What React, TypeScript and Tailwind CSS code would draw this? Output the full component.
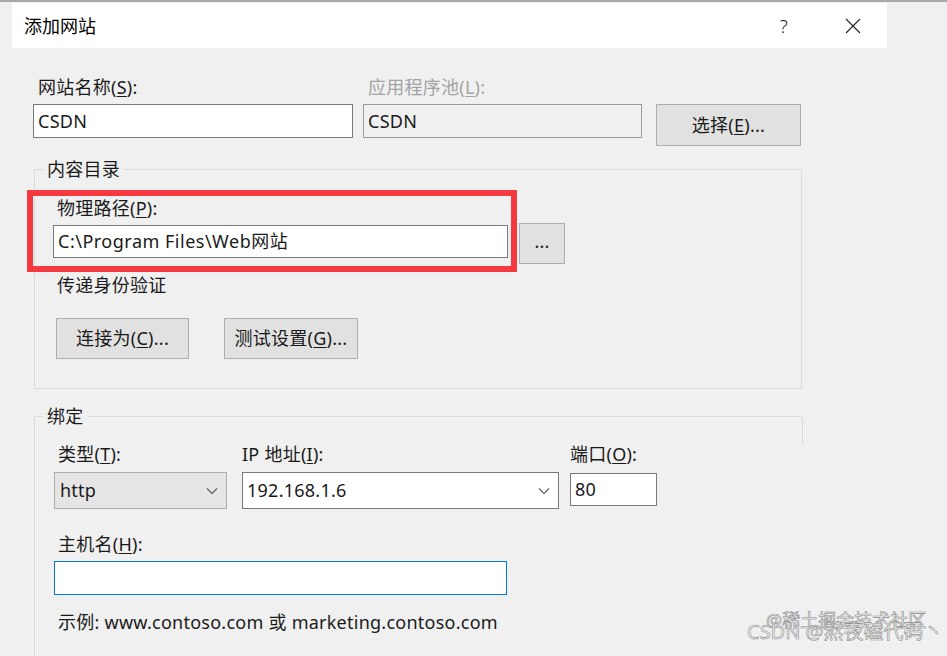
import React from "react";

const Key = ({ k }: { k: string }) => <span className="underline underline-offset-2">{k}</span>;

const Chevron = () => (
  <svg width="12" height="8" viewBox="0 0 12 8" className="shrink-0">
    <path d="M1 1.5 L6 6.5 L11 1.5" fill="none" stroke="#5a5a5a" strokeWidth="1.1" />
  </svg>
);

const GroupLabel = ({ children }: { children: React.ReactNode }) => (
  <div className="-mt-[11px] ml-[8px] h-[20px] w-fit bg-[#f0f0f0] px-[4px] leading-[20px]">{children}</div>
);

export default function App() {
  return (
    <div className="relative h-[656px] w-[947px] overflow-hidden bg-[#f0f0f0] font-['Noto_Sans','Noto_Sans_CJK_SC',sans-serif] text-[18px] tracking-[0.25px] text-[#1a1a1a]">
      <div className="h-[2px] bg-[#a8a8a8]" />

      {/* title bar */}
      <div className="ml-[12px] mt-[1px] flex h-[45px] w-[875px] items-center bg-white pl-[12px]">
        <span className="text-[18px] leading-[22px] tracking-normal text-black">添加网站</span>
        <span className="ml-auto text-[19px] font-light leading-[24px] text-[#222]">?</span>
        <svg width="16" height="16" viewBox="0 0 16 16" className="ml-[57px] mr-[26px]">
          <path d="M1 1 L15 15 M15 1 L1 15" stroke="#222" strokeWidth="1.1" />
        </svg>
      </div>

      <div className="pl-[33px] pt-[29px]">
        {/* site name / pool */}
        <div className="flex items-start">
          <div className="w-[320px]">
            <div className="h-[20px] pl-[5px] leading-[20px]">
              网站名称(<Key k="S" />):
            </div>
            <div className="mt-[7px] flex h-[34px] items-center border border-[#7a7a7a] bg-white pl-[4px]">CSDN</div>
          </div>
          <div className="ml-[10px] w-[279px]">
            <div className="h-[20px] pl-[5px] leading-[20px] text-[#a3a3a3]">
              应用程序池(<Key k="L" />):
            </div>
            <div className="mt-[7px] flex h-[34px] items-center border border-[#9a9a9a] bg-[#f0f0f0] pl-[4px]">CSDN</div>
          </div>
          <button className="ml-[14px] mt-[27px] flex h-[42px] w-[145px] items-center justify-center border border-[#adadad] bg-[#e1e1e1]">
            选择(<Key k="E" />)...
          </button>
        </div>

        {/* content directory */}
        <div className="ml-[1px] mt-[23px] h-[220px] w-[768px] border border-[#dadada]">
          <GroupLabel>内容目录</GroupLabel>
          <div className="ml-[22px] mt-[19px] h-[20px] leading-[20px]">
            物理路径(<Key k="P" />):
          </div>
          <div className="ml-[18px] mt-[5px] flex items-start">
            <div className="mt-[2px] flex h-[33px] w-[455px] items-center border border-[#7a7a7a] bg-white pl-[4px] tracking-[0.5px]">
              C:\Program Files\Web网站
            </div>
            <button className="ml-[11px] flex h-[41px] w-[46px] items-center justify-center border border-[#adadad] bg-[#e1e1e1] pb-[6px] leading-none">
              ...
            </button>
          </div>
          <div className="ml-[22px] mt-[11px] h-[20px] leading-[20px]">传递身份验证</div>
          <div className="ml-[21px] mt-[23px] flex gap-[35px]">
            <button className="flex h-[41px] w-[133px] items-center justify-center border border-[#adadad] bg-[#e1e1e1]">
              连接为(<Key k="C" />)...
            </button>
            <button className="flex h-[41px] w-[134px] items-center justify-center border border-[#adadad] bg-[#e1e1e1]">
              测试设置(<Key k="G" />)...
            </button>
          </div>
        </div>

        {/* binding */}
        <div className="ml-[1px] mt-[27px] h-[300px] w-[768px] border-l border-t border-[#dadada]">
          <div className="flex items-start justify-between">
            <GroupLabel>绑定</GroupLabel>
            <div className="-mr-px h-[26px] w-px bg-[#dadada]" />
          </div>
          <div className="ml-[19px] mt-[1px] flex items-start">
            <div className="w-[173px]">
              <div className="h-[20px] pl-[4px] leading-[20px]">
                类型(<Key k="T" />):
              </div>
              <div className="mt-[8px] flex h-[37px] items-center justify-between border border-[#adadad] bg-[#e5e5e5] pl-[5px] pr-[8px]">
                <span>http</span>
                <Chevron />
              </div>
            </div>
            <div className="ml-[15px] w-[317px]">
              <div className="h-[20px] leading-[20px]">
                IP 地址(<Key k="I" />):
              </div>
              <div className="mt-[8px] flex h-[37px] items-center justify-between border border-[#7a7a7a] bg-white pl-[4px] pr-[8px]">
                <span>192.168.1.6</span>
                <Chevron />
              </div>
            </div>
            <div className="ml-[11px] w-[87px]">
              <div className="h-[20px] leading-[20px]">
                端口(<Key k="O" />):
              </div>
              <div className="mt-[9px] flex h-[33px] items-center border border-[#7a7a7a] bg-white pl-[4px]">80</div>
            </div>
          </div>
          <div className="ml-[23px] mt-[25px] h-[20px] leading-[20px]">
            主机名(<Key k="H" />):
          </div>
          <div className="ml-[19px] mt-[7px] h-[34px] w-[453px] border border-[#0078d7] bg-white" />
          <div className="ml-[23px] mt-[17px] h-[20px] leading-[20px]">示例: www.contoso.com 或 marketing.contoso.com</div>
        </div>
      </div>

      {/* red annotation box */}
      <div className="pointer-events-none absolute left-[27px] top-[190px] h-[82px] w-[490px] border-[6px] border-[#f43a3e]" />

      {/* watermark */}
      <div className="pointer-events-none absolute left-[766px] top-[608px] whitespace-nowrap text-[18px] leading-[24px] tracking-normal text-[#f6f6f6] [-webkit-text-stroke:0.6px_#8c8c8c]">
        @稀土掘金技术社区
      </div>
      <div className="pointer-events-none absolute left-[747px] top-[619px] whitespace-nowrap text-[20px] leading-[26px] tracking-normal text-[#f6f6f6] [-webkit-text-stroke:0.6px_#8c8c8c]">
        CSDN @熬夜磕代码丶
      </div>
    </div>
  );
}
